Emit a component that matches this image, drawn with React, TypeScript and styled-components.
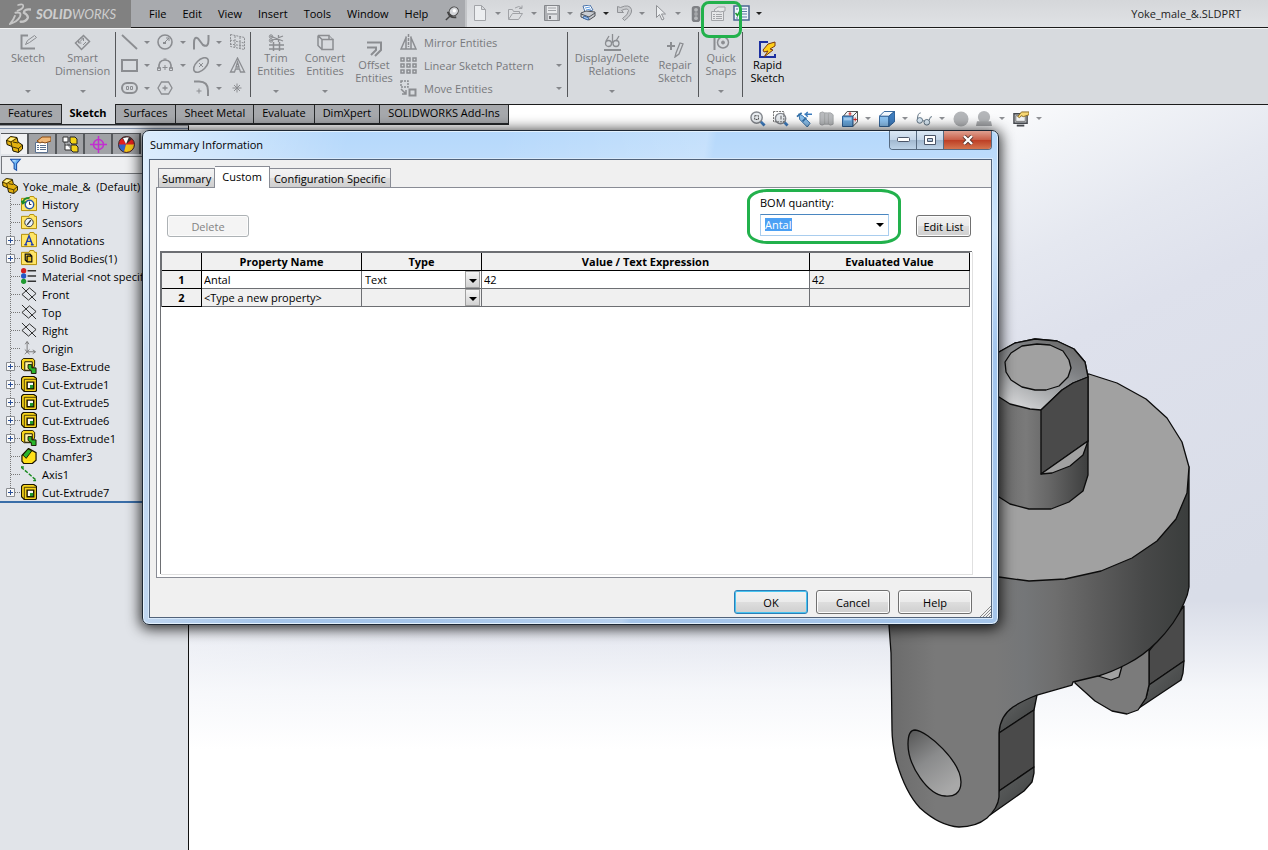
import React, { useEffect, useRef } from 'react';
import styled, { createGlobalStyle, css } from 'styled-components';

const GREEN = '#22b14c';

const GlobalStyle = createGlobalStyle`
  *, *::before, *::after { box-sizing: border-box; }
  body { margin: 0; background: #fff; }
  body, button, input, select, table {
    font-family: "Open Sans", "Noto Sans", sans-serif;
    font-size: 11px;
    line-height: 13px;
    color: #000;
  }
  button { padding: 0; border: 0; background: none; white-space: nowrap; }
  ul { list-style: none; margin: 0; padding: 0; }
  svg { display: block; flex: none; }
`;

/* ---------- icons ---------- */

const g = '#8b8d91';
const glyphs: Record<string, React.ReactNode> = {
  ds: (
    <g fill="none" stroke="#c6c6c6" strokeLinecap="round">
      <path d="M7 1.500Q11.500.2 11 2.800 10.300 4.800 6.500 6" strokeWidth="1.300" />
      <path d="M5 7.500Q10 6.500 8.500 10.500 6.500 14.500 1 16 3.500 13 4.500 10" strokeWidth="1.500" />
      <path d="M16.500 5Q11.500 4.500 11.500 7.500 15 9.500 14.500 11.500 13.500 14.500 9 14.500" strokeWidth="1.800" />
    </g>
  ),
  pin: (
    <g>
      <path d="M2 15 L7 10" stroke="#444" strokeWidth="1.500" />
      <ellipse cx="10.500" cy="6" rx="5" ry="4.500" fill="#d4d6da" stroke="#444" transform="rotate(-40 10 6)" />
      <path d="M4 6 Q6 13 13 12" fill="none" stroke="#444" strokeWidth="2" />
      <circle cx="11" cy="5" r="1.800" fill="#fff" />
    </g>
  ),
  newDoc: <path d="M2.500.5h7l4 4v11h-11zM9.500.5v4h4" fill="#eceef0" stroke="#a2a4a8" />,
  open: (
    <g fill="#dcdee1" stroke="#a0a2a6">
      <path d="M.5 14V4.500h4l1 2h6v3" />
      <path d="M.5 14.500l4-6h10l-4 6z" />
      <path d="M7 3q4-3 7 0m0-2.500v3h-3" fill="none" />
    </g>
  ),
  save: (
    <g>
      <path d="M.5.5h15v15h-15z" fill="#aeb0b4" stroke="#85878b" />
      <path d="M3 1h10v7H3z" fill="#e9eaec" />
      <path d="M4 3h8M4 5.500h8" stroke="#a0a2a6" />
      <path d="M4 10h9v5H4z" fill="#dfe0e3" />
      <path d="M5 11h2v3H5z" fill="#77797d" />
    </g>
  ),
  print: (
    <g>
      <path d="M3 1l7-1 3 5-8 2z" fill="#fff" stroke="#4a72a8" />
      <path d="M5 3l5-1M6 5l5-1" stroke="#5d9be0" />
      <path d="M1 8l5-2 9 1v4l-6 4-8-3z" fill="#c9ccd1" stroke="#4d5056" />
      <path d="M1 9l8 3 6-4" fill="none" stroke="#4d5056" />
      <path d="M4 11l5 2-1 2-5-2z" fill="#9fc3ec" stroke="#3f6aa5" />
    </g>
  ),
  undo: <path d="M1.500 1.500v6h6l-2-2q6-3 7 0 0 4-6 8 1 1 2 2 8-6 7-11-2-6-11-2z" fill="#c9cbce" stroke="#909296" />,
  cursor: <path d="M4.500.5v12l3-3 2.500 5.500 2-1-2.500-5h4z" fill="#eceef0" stroke="#8f9195" />,
  traffic: (
    <g>
      <rect x="4" y="0" width="9" height="17" rx="3" fill="#7f8185" />
      <circle cx="8.500" cy="4" r="2" fill="#b6b8bb" />
      <circle cx="8.500" cy="8.500" r="2" fill="#a5a7aa" />
      <circle cx="8.500" cy="13" r="2" fill="#b6b8bb" />
    </g>
  ),
  props: (
    <g stroke="#a2a4a8" fill="#e6e7e9">
      <path d="M1.500 6.500h12v9h-12z" />
      <path d="M3 9.500h2m1 0h6M3 11.500h2m1 0h6M3 13.500h2m1 0h6" />
      <path d="M4 5l4-3h7v4l-5 1-2-1-2 1z" />
    </g>
  ),
  list: (
    <g>
      <path d="M1 1h15v14H1z" fill="#eef4fb" stroke="#4a6590" strokeWidth="1.500" />
      <path d="M2.500 8l2 2.500 2-4" fill="none" stroke="#1c9a2e" strokeWidth="1.500" />
      <path d="M3 4h2M8 4h6M8 6.500h6M8 9h6M8 12h6M3 13h2" stroke="#5c78a3" />
    </g>
  ),
  sketch: (
    <g fill="none" stroke={g}>
      <path d="M8 1.500H1.500v13H15" strokeWidth="2" />
      <path d="M5.500 10.500l2-4 7-5 2 2-7 5z" />
    </g>
  ),
  dim: (
    <g fill="none" stroke={g}>
      <path d="M1.500 9L9.500 1.500l6 6-8 8z" strokeWidth="1.500" />
      <path d="M4.500 9l5-5m-5 5v-3m0 3h3m2-5v3m0-3h-3M9 11l3-3" />
    </g>
  ),
  line: <path d="M1 1l15 14" stroke={g} strokeWidth="1.800" />,
  circle: (
    <g fill="none" stroke={g}>
      <circle cx="8" cy="8" r="7" strokeWidth="1.600" />
      <path d="M7 9l5-5M9 4h3v3" />
      <path d="M6 8h3v2H6z" fill={g} stroke="none" />
    </g>
  ),
  spline: <path d="M1 15.500V9Q1 2 5 4.500L10 11Q15.500 14 15.500 6V1" fill="none" stroke={g} strokeWidth="2" />,
  grid: <path d="M1.500.5l14 3v12l-14-3zM6 2v12M11 3v12M1 6l14 3M1 10l14 2" fill="none" stroke={g} strokeDasharray="2 1" />,
  rect: <path d="M1 3h15v11H1z" fill="none" stroke={g} strokeWidth="2" />,
  arc: (
    <g fill="none" stroke={g}>
      <path d="M2 12Q1 3 8 3t6 9" strokeWidth="1.600" />
      <path d="M5.500 10.500h5m-2.500-2.500v5M.5 10.500h3v3h-3zM12.500 10.500h3v3h-3zM6.500 2h3" />
    </g>
  ),
  ellipse: (
    <g fill="none" stroke={g}>
      <ellipse cx="8" cy="8" rx="9" ry="5" transform="rotate(-45 8 8)" strokeWidth="1.600" />
      <path d="M6 6l4 4m0-4l-4 4" />
    </g>
  ),
  text: <path d="M8.500 1L1.500 15h4l1-3h4l1 3h4zM8.500 5L7 10h3z" fill="none" stroke={g} strokeWidth="1.300" />,
  slot: (
    <g fill="none" stroke={g}>
      <rect x="1" y="3" width="15" height="10" rx="5" strokeWidth="2" />
      <path d="M5.500 6.500h2v3h-2zM9.500 6.500h2v3h-2z" />
    </g>
  ),
  hex: <path d="M4.500 2h7l3.500 6-3.500 6h-7L1 8zM5.500 8h5M8 5.500v5" fill="none" stroke={g} strokeWidth="1.300" />,
  fillet: (
    <g fill="none" stroke={g}>
      <path d="M1 1.500h5q9 0 9 9V16" strokeWidth="2" />
      <path d="M3.500 11h5M6 8.500v5" />
    </g>
  ),
  point: <path d="M3.500 8h9M8 3.500v9M5 5l6 6M11 5l-6 6" stroke={g} fill="none" />,
  trim: (
    <g fill="none" stroke={g}>
      <path d="M1 11h15M1 15h15M5.500 8v9M11.500 8v9" strokeWidth="1.500" />
      <path d="M2 2l13 5M2 7l13-5M10.500 1v7" strokeWidth="1.300" />
      <circle cx="3" cy="2.500" r="1.700" />
      <circle cx="3" cy="6.500" r="1.700" />
    </g>
  ),
  convert: (
    <g fill="none" stroke={g}>
      <path d="M1 1.500h11v4M1 1.500v10l4 4M1 1.500l4 4h11v10H5v-10" strokeWidth="1.500" />
      <path d="M12 1.500l4 4" />
    </g>
  ),
  offset: <path d="M1 1.500h14V9l-6 6M1 6.500h9V9l-5 5" fill="none" stroke={g} strokeWidth="2" />,
  mirror: (
    <g fill="none" stroke={g} strokeWidth="1.500">
      <path d="M6.500 2.500L1 15h15L10.500 2.500M6 15V2.500M11 15V2.500" />
      <path d="M8.500 0v13" strokeDasharray="3 1" />
    </g>
  ),
  pattern: (
    <path
      d="M1 1h3v3H1zM7 1h3v3H7zM13 1h3v3h-3zM1 7h3v3H1zM7 7h3v3H7zM13 7h3v3h-3zM1 13h3v3H1zM7 13h3v3H7zM13 13h3v3h-3z"
      fill="none"
      stroke={g}
      strokeWidth="1.500"
    />
  ),
  move: (
    <g fill="none" stroke={g}>
      <path d="M1 1h7v6H1z" strokeWidth="1.500" strokeDasharray="2 1" />
      <path d="M9.500 9.500h6v6h-6z" strokeWidth="2" />
      <path d="M1 9l5 5m0-4v4H2" strokeWidth="1.500" />
    </g>
  ),
  relations: (
    <g fill="none" stroke={g}>
      <path d="M0 16h17" strokeWidth="2" />
      <circle cx="4.500" cy="9.500" r="3" strokeWidth="1.300" />
      <circle cx="12" cy="9.500" r="3" strokeWidth="1.300" />
      <path d="M2 7l3-5M8.500 0v9M12 7l3-5" strokeWidth="1.300" />
    </g>
  ),
  repair: (
    <g fill="none" stroke={g}>
      <path d="M0 5h8M4 1v8" strokeWidth="2" />
      <path d="M9 12l4-10 3 1-4 10-4 3z" strokeWidth="1.300" />
    </g>
  ),
  snaps: (
    <g fill="none" stroke={g}>
      <path d="M1.500 1v15" strokeWidth="2" />
      <circle cx="10" cy="8.500" r="5.500" strokeWidth="1.500" />
      <circle cx="10" cy="8.500" r="1.500" fill={g} />
    </g>
  ),
  rapid: (
    <g>
      <path d="M9 1H1v15h15v-3" fill="none" stroke="#1c2fa0" strokeWidth="2" />
      <path d="M4 9l5-6 7-2v4l-5 3 3 1-9 7 4-6-4 1z" fill="#ffcf1a" stroke="#7a3a10" />
    </g>
  ),
  zoomFit: (
    <g>
      <path d="M11 11l4.500 4.500" stroke="#3f7fc4" strokeWidth="3" />
      <circle cx="7" cy="7" r="6" fill="#e9edf1" stroke="#84888e" strokeWidth="1.500" />
      <path d="M5 5h4v4H5z" fill="none" stroke="#444" strokeDasharray="2 1" />
    </g>
  ),
  zoomArea: (
    <g>
      <path d="M11 11l4.500 4.500" stroke="#3f7fc4" strokeWidth="3" />
      <circle cx="8" cy="8" r="5.500" fill="#e9edf1" stroke="#84888e" strokeWidth="1.500" />
      <path d="M.5.500h11v11H.5z" fill="none" stroke="#666" strokeDasharray="2 1" />
      <path d="M8.500 5v4" stroke="#555" />
    </g>
  ),
  prevView: (
    <g>
      <path d="M3 3l4 2 8 8-3 4-8-8z" fill="#8cc0ec" stroke="#2f6da6" />
      <path d="M1 6l5-4M7 11l4-4" stroke="#2f6da6" strokeWidth="1.800" />
      <path d="M9 3.500h8M10 3.500l2.500-2.500M10 3.500l2.500 2.500" stroke="#3a7bbd" strokeWidth="1.500" />
    </g>
  ),
  section: <path d="M1 2q3-2 5 0h3q4-1 6 2v10q-3 2-5 0H6q-3 2-5 0z M6 2v12 M10 3v11" fill="#b9bbbe" stroke="#a3a5a8" />,
  orient: (
    <g>
      <path d="M1.500 5.500l4-5h11v11l-5 5v-11z" fill="#f5f6f8" stroke="#444" />
      <path d="M.5 5.500h11v11H.5z" fill="#6aa9df" stroke="#245a94" />
      <path d="M2 7h8v3H2z" fill="#a5cff3" />
      <path d="M11.500 5.500l5-5" stroke="#444" />
      <path d="M8.500 1v4M7 3h3M12 9h4M14 7v4" stroke="#d02424" />
    </g>
  ),
  display: (
    <g>
      <path d="M.5 5.500h10v11H.5z" fill="#8ec4f2" stroke="#2b5f98" />
      <path d="M.5 5.500l5-5h11l-6 5z" fill="#f2f7fc" stroke="#2b5f98" />
      <path d="M10.500 5.500l6-5v11l-6 5z" fill="#3f7ec0" stroke="#2b5f98" />
    </g>
  ),
  glasses: (
    <g fill="#dcebf7" stroke="#5c7080">
      <circle cx="4" cy="10" r="3" />
      <circle cx="11.500" cy="12" r="3" />
      <path d="M1.500 8Q2 2 5 2M14 10q1-5 3-4M7 10l2 1" fill="none" />
    </g>
  ),
  sphere: <circle cx="8.500" cy="8.500" r="8" fill="#b4b6b9" />,
  scene: (
    <g fill="#b4b6b9">
      <circle cx="8.500" cy="6.500" r="6.500" />
      <path d="M1 11h15l1 5H0z" fill="#a9abae" />
    </g>
  ),
  monitor: (
    <g>
      <path d="M1 3h14v10H1z" fill="#c3c6ca" stroke="#45484d" strokeWidth="1.500" />
      <path d="M3 5h10v6H3z" fill="#eef1f4" stroke="#777" />
      <path d="M4 15.500h8" stroke="#45484d" strokeWidth="2" />
      <path d="M5 6l4-5h8v3l-6 2-2-1-2 2z" fill="#f6d774" stroke="#8a6a20" />
    </g>
  ),
  part: (
    <g stroke="#1d1700">
      <path d="M.5 4l4-3.500L11 1.500 12 6l4.500 3v4l-4 3.500L7 15 6 10.500 1 8.500z" fill="#e3b10f" />
      <path d="M1 4.500l4 1.500 6-4M5 6l1 4.500M6.500 11l6 1.500 4-3.500M12.500 12.500v4M7 6l5 1" fill="none" strokeWidth=".8" />
      <path d="M2 4l3-2.500 4.500.5L5 5z" fill="#fff08a" stroke="none" />
    </g>
  ),
  propPanel: (
    <g>
      <path d="M1.500 6.500h12v10h-12z" fill="#fff" stroke="#5b7190" />
      <path d="M3 9.500h2m1 0h6M3 11.500h2m1 0h6M3 13.500h2m1 0h6" stroke="#5b7190" />
      <path d="M3 5l5-4h9v4l-6 2-3-1-2 1z" fill="#f0b878" stroke="#8d4c12" />
    </g>
  ),
  config: (
    <g>
      <path d="M1 1h5v5H1zM3 6v8h6M3 9h5" fill="#fff" stroke="#333" />
      <path d="M8 1h5l2 2v5h-5L8 6zM9 9h5l2 2v5h-5l-2-2z" fill="#f2d21a" stroke="#222" />
    </g>
  ),
  target: (
    <g fill="none" stroke="#c22fd0" strokeWidth="1.500">
      <circle cx="8.500" cy="8.500" r="5" />
      <path d="M8.500 0v17M0 8.500h17" />
    </g>
  ),
  ball: (
    <g>
      <circle cx="8.500" cy="8.500" r="8" fill="#e02020" />
      <path d="M8.500 8L4 2Q9-1 14 3z" fill="#333" />
      <path d="M8 8.500H.5Q0 14 6 16z" fill="#2f66c8" />
      <path d="M8 8.500l8.500 0Q15 17 6 16z" fill="#f2c81a" />
      <path d="M8 8L5 2l6-1z" fill="#fff" />
      <circle cx="8.500" cy="8.500" r="8" fill="none" stroke="#3a2a2a" />
    </g>
  ),
  funnel: (
    <g>
      <path d="M.5 1.500h12L8 7v8l-3-2V7z" fill="#6db6f5" stroke="#1c4fa8" strokeWidth="1.300" />
      <path d="M3 3.500h4" stroke="#e5f4ff" />
    </g>
  ),
  history: (
    <g>
      <path d="M.5 2.500h8l1-2h4l1 2h2v13H.5z" fill="#ffe566" stroke="#b08a00" />
      <circle cx="9" cy="9" r="4.500" fill="#fff" stroke="#2a5aa8" strokeWidth="1.500" />
      <path d="M9 6v3h2" stroke="#222" fill="none" />
      <path d="M2 7q1-5 7-5M.5 5l1.500 3 3-2" stroke="#178a2a" strokeWidth="1.800" fill="none" />
    </g>
  ),
  sensor: (
    <g>
      <path d="M.5 2.500h8l1-2h4l1 2h2v13H.5z" fill="#ffe566" stroke="#b08a00" />
      <circle cx="8.500" cy="9" r="4.500" fill="#e8f2fb" stroke="#333" />
      <path d="M6.500 11.500l4-5" stroke="#333" strokeWidth="1.500" />
    </g>
  ),
  annot: (
    <g>
      <path d="M.5 2.500h8l1-2h4l1 2h2v13H.5z" fill="#ffe566" stroke="#b08a00" />
      <path d="M5 13l3.500-9 3.500 9M6.500 10h4M3.500 13.500h3M10.500 13.500h3" fill="none" stroke="#1f3fae" strokeWidth="1.500" />
    </g>
  ),
  bodies: (
    <g>
      <path d="M.5 2.500h8l1-2h4l1 2h2v13H.5z" fill="#ffe566" stroke="#b08a00" />
      <path d="M4.500 4.500h5l2 2v6h-5l-2-2zM6.500 6.500h5m-5 0v6" fill="#e8c020" stroke="#111" strokeWidth="1.300" />
    </g>
  ),
  material: (
    <g>
      <path d="M7 3h9M7 8.500h9M7 14h9" stroke="#333" strokeWidth="1.500" />
      <circle cx="2.800" cy="2.800" r="2.800" fill="#d32020" />
      <circle cx="2.800" cy="8.500" r="2.800" fill="#2458c8" />
      <circle cx="2.800" cy="14.200" r="2.800" fill="#1e9a30" />
    </g>
  ),
  plane: <path d="M1 9l8-7 7 6-8 7zM1 1l15 15" fill="none" stroke="#222" />,
  origin: <path d="M6.500 13V2M4.500 4.500l2-3 2 3M6 12.500h9M12.500 10.500l3 2-3 2M4 10l5 5M9 10l-5 5" fill="none" stroke="#777" />,
  boss: (
    <g stroke="#1a1400">
      <path d="M.5 2.500l2-2h10l2 2v5l-2 6h-9l-3-2z" fill="#f6d21a" />
      <path d="M4 4h8v9H4z" fill="#fff3a8" />
      <path d="M7.500 7h4v3.500h4.500v6h-5v-3L7.500 11z" fill="#2bb52b" />
    </g>
  ),
  cut: (
    <g stroke="#1a1400">
      <path d="M.5 2.500l2-2h11l3 2v13l-1 1h-12l-3-3z" fill="#f6d21a" strokeWidth="1.300" />
      <path d="M3.500 3.500h13M3.500 3.500v13" strokeWidth=".8" />
      <path d="M6.500 6.500h7v7h-7z" fill="#fff" strokeWidth="1.500" />
      <path d="M9.500 9.500h3.500V13H9.500z" fill="#1f9a2c" stroke="none" />
    </g>
  ),
  chamfer: (
    <g stroke="#1a1400">
      <path d="M1 8l7-7.500 8 4.500v8l-4 3.500H3L1 14z" fill="#ffe01a" strokeWidth="1.300" />
      <path d="M2 7.500L7.500 1l4 2-6 8z" fill="#2bb52b" />
    </g>
  ),
  axis: (
    <g stroke="#178a1e" strokeWidth="1.500">
      <path d="M0 1l16 14" strokeDasharray="4 1.500" />
      <path d="M0 1h3M13 15.500h3" />
    </g>
  ),
};

const Icon = ({ name, size = 16 }: { name: string; size?: number }) => (
  <svg width={size} height={size} viewBox="0 0 17 17" aria-hidden="true">
    {glyphs[name]}
  </svg>
);

const Caret = ({ color = '#85878b', size = 6 }: { color?: string; size?: number }) => (
  <svg width={size} height={size / 2} viewBox="0 0 6 3" aria-hidden="true">
    <path d="M0 0h6L3 3z" fill={color} />
  </svg>
);

/* ---------- title bar ---------- */

const Page = styled.div`
  position: relative;
  display: flex;
  flex-direction: column;
  min-height: 100vh;
  background:
    linear-gradient(180deg, rgba(255, 255, 255, 0) 600px, rgba(250, 251, 253, 0.85) 690px, #fff 750px),
    linear-gradient(155deg, #fff 38%, #f1f3f7 44%, #e5e8f0 51%, #dee1ec 58%, #d9dde8 80%);
`;

const TitleBar = styled.header`
  display: flex;
  height: 28px;
  background: linear-gradient(#d5d7da, #e0e2e5);
  border-bottom: 1px solid #1c1c1c;
`;

const Logo = styled.div`
  display: flex;
  align-items: center;
  gap: 5px;
  width: 131px;
  padding-left: 9px;
  margin-bottom: -1px;
  background: #818181;
  color: #cdcdcd;
`;

const Brand = styled.span<{ $bold?: boolean }>`
  font: italic ${(p) => (p.$bold ? 900 : 400)} 13px/30px Lato, sans-serif;
`;

const Menu = styled.nav`
  display: flex;
  align-items: center;
  gap: 16px;
  width: 336px;
  padding-left: 18px;
  background: #a8aaae;
  border-right: 2px solid #c3c5c8;
`;

const MenuItem = styled.button`
  font-size: 11px;
`;

const QuickBar = styled.div`
  display: flex;
  align-items: center;
  padding-left: 3px;
`;

const ToolButton = styled.button<{ $width?: number }>`
  display: flex;
  align-items: center;
  justify-content: center;
  width: ${(p) => p.$width ?? 20}px;
  height: 20px;
`;

const Highlighted = styled.span`
  position: relative;
  display: flex;
  margin: 0 3px 0 2px;

  &::after {
    content: '';
    position: absolute;
    inset: -3px -14px -14px -7px;
    border: 3px solid ${GREEN};
    border-radius: 8px;
    z-index: 2;
    pointer-events: none;
  }
`;

const FileName = styled.span`
  margin: 7px 27px 0 auto;
  color: #222;
`;

/* ---------- ribbon ---------- */

const Ribbon = styled.div`
  display: flex;
  height: 77px;
  padding: 3px 0 7px;
  background: #d7dade;
  border-top: 1px solid #f3f4f5;
  border-bottom: 1px solid #1c1c1c;
`;

const Group = styled.div<{ $width?: number; $last?: boolean }>`
  display: flex;
  width: ${(p) => (p.$width ? `${p.$width}px` : 'auto')};
  padding-left: 3px;
  border-right: ${(p) => (p.$last ? 'none' : '1px solid #55575a')};
`;

const BigButton = styled.button<{ $width: number; $low?: boolean; $on?: boolean }>`
  display: flex;
  flex-direction: column;
  align-items: center;
  width: ${(p) => p.$width}px;
  padding-top: ${(p) => (p.$low ? 9 : 2)}px;
  color: ${(p) => (p.$on ? '#000' : '#77797c')};
  white-space: pre-line;

  & > span:last-of-type {
    height: 39px;
    line-height: 13px;
  }
`;

const DrawGrid = styled.div`
  display: grid;
  grid-template-columns: repeat(4, 36px);
  grid-auto-rows: 23px;
  align-items: start;
  width: 132px;
`;

const DrawCell = styled.div`
  display: flex;
  align-items: center;
`;

const List = styled.div`
  display: flex;
  flex: 1;
  flex-direction: column;
`;

const ListButton = styled.button`
  display: flex;
  flex: none;
  align-items: center;
  gap: 7px;
  height: 23px;
  padding: 0 5px 3px 4px;
  color: #77797c;

  & > span {
    flex: 1;
    text-align: left;
  }
`;

const Big = ({ icon, label, width, low, on }: { icon: string; label: string; width: number; low?: boolean; on?: boolean }) => (
  <BigButton $width={width} $low={low} $on={on}>
    <Icon name={icon} size={17} />
    <span>{label}</span>
    {!low && <Caret />}
  </BigButton>
);

const drawTools: [string, boolean][] = [
  ['line', true], ['circle', true], ['spline', true], ['grid', false],
  ['rect', true], ['arc', true], ['ellipse', true], ['text', false],
  ['slot', true], ['hex', false], ['fillet', true], ['point', false],
];

/* ---------- command tabs and view toolbar ---------- */

const TabRow = styled.div`
  display: flex;
  height: 20px;
`;

const CommandTab = styled.button<{ $active?: boolean }>`
  height: 20px;
  padding: 0 8px 3px;
  border: solid #26282a;
  border-width: 0 1px 2px 0;
  background: #a6a8ac;

  ${(p) =>
    p.$active &&
    css`
      height: 21px;
      margin-top: -1px;
      border-bottom-width: 1px;
      background: #d7dade;
      font-weight: 700;
    `}
`;

const ViewBar = styled.div`
  display: flex;
  align-items: center;
  height: 27px;
  margin: 0 222px 0 auto;
`;

const viewTools: [string, boolean][] = [
  ['zoomFit', false], ['zoomArea', false], ['prevView', false], ['section', false], ['orient', true],
  ['display', true], ['glasses', true], ['sphere', false], ['scene', true], ['monitor', true],
];

/* ---------- feature tree ---------- */

const Workspace = styled.main`
  display: flex;
  flex: 1;
`;

const SidePanel = styled.aside`
  width: 189px;
  padding-top: 2px;
  background: #e1e4e9;
  border-top: 1px solid #8d9096;
  border-right: 1px solid #111;
`;

const PanelTabs = styled.div`
  display: flex;
  padding: 4px 0 2px 1px;
  border-top: 1px solid #7f8fa8;
`;

const PanelTab = styled.button<{ $active?: boolean }>`
  display: flex;
  align-items: center;
  justify-content: center;
  width: 28px;
  height: 21px;
  border-right: 2px solid #55585c;
  border-top: 1px solid #55585c;
  background: ${(p) => (p.$active ? '#f0f1f3' : '#a0a2a6')};
`;

const FilterBox = styled.div`
  display: flex;
  align-items: center;
  height: 18px;
  margin-left: 1px;
  padding-left: 8px;
  border: 1px solid #74777c;
  background: #eeeff1;
`;

const Tree = styled.ul`
  padding-top: 3px;
  border-bottom: 2px solid #3a6ea8;
`;

const TreeItem = styled.li<{ $root?: boolean }>`
  display: flex;
  align-items: center;
  gap: 5px;
  height: 18px;
  padding-left: ${(p) => (p.$root ? 2 : 0)}px;
  white-space: pre;
`;

const TreeIcons = styled.span`
  display: flex;
  align-items: center;
`;

const Guide = ({ expandable, last }: { expandable?: boolean; last?: boolean }) => (
  <svg width="21" height="18" viewBox="0 0 21 18" aria-hidden="true">
    <path d={`M10.500 0V${last ? 9 : 18}M11 9.500h9`} stroke="#777" strokeDasharray="1 1" fill="none" />
    {expandable && (
      <g>
        <path d="M6.500 5.500h8v8h-8z" fill="#f8f9fa" stroke="#8a8d92" />
        <path d="M8 9.500h5M10.500 7v5" stroke="#2a4f98" />
      </g>
    )}
  </svg>
);

const features: { icon: string; label: string; plus?: boolean }[] = [
  { icon: 'history', label: 'History' },
  { icon: 'sensor', label: 'Sensors' },
  { icon: 'annot', label: 'Annotations', plus: true },
  { icon: 'bodies', label: 'Solid Bodies(1)', plus: true },
  { icon: 'material', label: 'Material <not specified>' },
  { icon: 'plane', label: 'Front' },
  { icon: 'plane', label: 'Top' },
  { icon: 'plane', label: 'Right' },
  { icon: 'origin', label: 'Origin' },
  { icon: 'boss', label: 'Base-Extrude', plus: true },
  { icon: 'cut', label: 'Cut-Extrude1', plus: true },
  { icon: 'cut', label: 'Cut-Extrude5', plus: true },
  { icon: 'cut', label: 'Cut-Extrude6', plus: true },
  { icon: 'boss', label: 'Boss-Extrude1', plus: true },
  { icon: 'chamfer', label: 'Chamfer3' },
  { icon: 'axis', label: 'Axis1' },
  { icon: 'cut', label: 'Cut-Extrude7', plus: true },
];

/* ---------- model view ---------- */

const Viewport = styled.section`
  display: flex;
  flex: 1;
  justify-content: flex-end;
  align-items: flex-start;
  padding-top: 195px;
  overflow: hidden;
`;

const YokeModel = () => (
  <svg width="388" height="520" viewBox="880 320 388 520" role="img" aria-label="Yoke part">
    <defs>
      <linearGradient id="body" gradientUnits="userSpaceOnUse" x1="890" y1="0" x2="1190" y2="0">
        <stop offset="0" stopColor="#6b6b6b" />
        <stop offset=".15" stopColor="#797979" />
        <stop offset=".35" stopColor="#797979" />
        <stop offset=".45" stopColor="#747678" />
        <stop offset=".55" stopColor="#6e6e6e" />
        <stop offset=".68" stopColor="#5d5d5d" />
        <stop offset=".85" stopColor="#474848" />
        <stop offset="1" stopColor="#3a3d3c" />
      </linearGradient>
      <linearGradient id="shaft" gradientUnits="userSpaceOnUse" x1="999" y1="0" x2="1089" y2="0">
        <stop offset="0" stopColor="#6b6b6b" />
        <stop offset=".3" stopColor="#7a7a7a" />
        <stop offset=".55" stopColor="#676767" />
        <stop offset="1" stopColor="#3c3d3d" />
      </linearGradient>
      <linearGradient id="cone" gradientUnits="userSpaceOnUse" x1="1030" y1="410" x2="1064" y2="342">
        <stop offset="0" stopColor="#cfd0d2" />
        <stop offset=".3" stopColor="#aaacae" />
        <stop offset=".7" stopColor="#7f8184" />
        <stop offset="1" stopColor="#6c6c6c" />
      </linearGradient>
      <linearGradient id="bore" x1="0" y1="0" x2=".6" y2="1">
        <stop offset="0" stopColor="#555" />
        <stop offset=".5" stopColor="#8a8b8c" />
        <stop offset="1" stopColor="#a8a8a8" />
      </linearGradient>
      <linearGradient id="bend" x1="0" y1="0" x2="1" y2="1">
        <stop offset="0" stopColor="#646666" />
        <stop offset="1" stopColor="#3c3e3e" />
      </linearGradient>
    </defs>
    <g stroke="#0c0c0c" strokeWidth="1.300" strokeLinejoin="round">
      <path d="M1149 651L1184 606V661L1149 685z" fill="#4a4a4a" />
      <path d="M1184 661L1183 673 1181 680 1139 708 1146 698 1149 685z" fill="url(#bend)" />
      <path d="M1075 683L1095 701 1112 711 1127 714 1138 710 1146 698 1149 685V640H1075z" fill="#7b7b7b" />
      <path d="M1098 676L1111 680 1119 677 1122 666z" fill="#a2a2a2" />
      <path d="M1037 695L1034 710 999 733 1000 705z" fill="url(#bend)" />
      <path d="M999 733L1034 710V767L999 791z" fill="#4a4a4a" />
      <path d="M1034 767L1034 773 1032 782 1024 791 990 815 999 791z" fill="url(#bend)" />
      <path
        d="M1189 467V587Q1188 595 1184 603 1180 613 1173 623 1165 634 1157 642 1143 656 1127 664 1112 672 1098 676L1073 682 1072 685 1037 695Q1022 701 1013 707 1000 716 999 733V797Q998 808 987 818 976 827 959 827 940 826 920 808 905 792 896 760 892 742 892 730L891 653 889 625 889 540 1000 480z"
        fill="url(#body)"
      />
      <path
        d="M1089 374L1117 383 1146 399 1167 418 1182 442 1189 467 1187 493 1176 519 1157 541 1132 558 1101 571 1065 579 1029 581 999 577 950 560 950 400z"
        fill="#a1a1a1"
      />
      <path
        d="M980 360L999 352 1015 343 1035 339 1057 341 1074 349 1085 362 1088 377V475L1083 491 1069 502 1051 509 1029 509 1010 504 999 497 980 485z"
        fill="url(#shaft)"
      />
      <path
        d="M980 360L999 352 1015 343 1035 339 1057 341 1074 349 1085 362 1088 377 1073 383 1062 390 1041 410 1030 409 1010 404 999 397 980 385z"
        fill="url(#cone)"
      />
      <path
        d="M1037 344L1050 345 1063 351 1069 360 1071 368 1068 377 1059 386 1046 390 1035 390 1022 387 1011 380 1006 372 1005 362 1011 353 1022 346z"
        fill="#a1a1a1"
      />
      <path d="M1041 410L1062 390 1073 383 1088 377V441L1041 474z" fill="#4a4a4a" />
      <path d="M1041 474L1088 441 1083 455 1070 466 1052 473z" fill="#a1a1a1" />
      <path
        d="M915 730C928 731 961 762 961 782 961 794 953 797 945 796 928 795 908 766 908 744 908 735 910 730 915 730z"
        fill="url(#bore)"
      />
    </g>
  </svg>
);

/* ---------- dialog ---------- */

const Window = styled.div`
  position: absolute;
  top: 130px;
  left: 142px;
  right: 269px;
  padding: 0 6px 6px;
  border: 1px solid #1d2733;
  border-radius: 7px;
  background:
    linear-gradient(100deg, rgba(255, 255, 255, 0.5), rgba(255, 255, 255, 0) 22%, rgba(255, 255, 255, 0) 38%, rgba(255, 255, 255, 0.2) 60%, rgba(255, 255, 255, 0) 61%),
    linear-gradient(180deg, #b5d8fb, #cfe5fb 20%, #a3c6ee 45%, #a5c5ea);
  box-shadow:
    inset 0 0 0 1px #e3f1fd,
    0 2px 14px 2px rgba(0, 0, 0, 0.8);
`;

const Caption = styled.div`
  display: flex;
  justify-content: space-between;
  align-items: flex-start;
  height: 28px;
`;

const CaptionText = styled.h1`
  margin: 7px 0 0 1px;
  font-size: 11px;
  line-height: 14px;
  font-weight: 400;
`;

const CaptionButtons = styled.div`
  display: flex;
  border: 1px solid #566a80;
  border-top: 0;
  border-radius: 0 0 4px 4px;
  overflow: hidden;
`;

const CaptionButton = styled.button<{ $close?: boolean }>`
  display: flex;
  align-items: center;
  justify-content: center;
  width: ${(p) => (p.$close ? 47 : 27)}px;
  height: 18px;
  border-right: ${(p) => (p.$close ? 0 : '1px solid #566a80')};
  background: ${(p) =>
    p.$close ? 'linear-gradient(#dfa090, #c9604a 48%, #bd3f25 52%, #d4754f)' : 'linear-gradient(#dbe8f5, #c3d5e8 48%, #a2b9d0 52%, #bdd3e8)'};
`;

const Client = styled.div`
  padding: 6px 0 3px 6px;
  border: 1px solid #52637a;
  background: #f0f0f0;
  box-shadow: 0 0 0 1px #d8e9fa;
`;

const Tabs = styled.div`
  display: flex;
  align-items: flex-end;
  padding-left: 2px;
`;

const Tab = styled.button<{ $active?: boolean }>`
  height: 19px;
  padding: 0 4px;
  border: 1px solid #898c95;
  border-left-width: 0;
  border-bottom-width: 0;
  background: linear-gradient(#f3f3f3, #ebebeb 50%, #dcdcdc 52%, #cfcfcf);

  &:first-child {
    padding: 0 3px;
    border-left-width: 1px;
  }

  ${(p) =>
    p.$active &&
    css`
      height: 22px;
      margin-bottom: -1px;
      padding: 0 7px 2px;
      background: #fff;
    `}
`;

const Panel = styled.div`
  padding: 1px 19px 3px 3px;
  border: solid #898c95;
  border-width: 1px 0 1px 1px;
  background: #fff;
`;

const Controls = styled.div`
  display: flex;
  align-items: flex-end;
  padding: 0 1px 0 7px;
  margin-bottom: 7px;
`;

const Button = styled.button<{ $width: number; $tall?: boolean; $primary?: boolean }>`
  width: ${(p) => p.$width}px;
  height: ${(p) => (p.$tall ? 24 : 22)}px;
  border: 1px solid ${(p) => (p.$primary ? '#2c7fb8' : '#707070')};
  border-radius: 3px;
  background: linear-gradient(#f2f2f2, #ebebeb 48%, #dddddd 52%, #cfcfcf);
  box-shadow: inset 0 0 0 1px ${(p) => (p.$primary ? '#48c4f0' : '#fcfcfc')};

  &:disabled {
    border-color: #adb2b5;
    background: #f4f4f4;
    color: #838383;
  }
`;

const Quantity = styled.div`
  display: flex;
  flex-direction: column;
  gap: 5px;
  width: 154px;
  height: 55px;
  margin: 0 15px 0 auto;
  padding: 4px 10px 0;
  border: 3px solid ${GREEN};
  border-radius: 20px / 12px;
`;

const ComboBox = styled.div`
  display: flex;
  align-items: center;
  width: 129px;
  height: 22px;
  padding: 0 4px 1px;
  border: 1px solid #a9cdee;
  border-top-color: #4a86c0;
`;

const ComboInput = styled.input`
  flex: 1;
  min-width: 0;
  padding: 0;
  border: 0;
  outline: 0;
  background: none;

  &::selection {
    background: #4ba0f4;
    color: #fff;
  }
`;

const EditSlot = styled.div`
  padding-bottom: 7px;
`;

const GridFrame = styled.div`
  min-height: 323px;
  padding-right: 2px;
  border: solid #6d6f73;
  border-width: 1px 0 0 1px;
  box-shadow: 1px 1px 0 #e0e0e0;
`;

const Grid = styled.table`
  width: 100%;
  table-layout: fixed;
  border-collapse: separate;
  border-spacing: 0;
  border: solid #6d6f73;
  border-width: 1px 0 0 1px;

  th,
  td {
    height: 18px;
    padding: 0;
    border: solid #6d6f73;
    border-width: 0 1px 1px 0;
    line-height: 13px;
  }

  th {
    border-color: #000;
    background: #f0f0f0;
    font-weight: 700;
    text-align: center;
  }
`;

const GridRow = styled.tr<{ $shaded?: boolean }>`
  td {
    background: ${(p) => (p.$shaded ? '#f0f0f0' : '#fff')};
  }
  td:last-child {
    padding-left: 2px;
    background: #f0f0f0;
  }
`;

const CellInput = styled.input`
  display: block;
  width: 100%;
  height: 17px;
  padding: 0 2px;
  border: 0;
  background: none;
`;

const TypeCell = styled.div`
  display: flex;
  height: 17px;
`;

const TypeSelect = styled.select`
  flex: 1;
  min-width: 0;
  padding: 0 3px;
  border: 0;
  background: none;
  appearance: none;
`;

const DropMark = styled.span`
  display: flex;
  align-items: center;
  justify-content: center;
  width: 15px;
  margin-right: 1px;
  padding-top: 3px;
  border: 1px solid #a0a0a0;
  background: linear-gradient(#f4f4f4, #d2d2d2);
`;

const Footer = styled.div`
  display: flex;
  justify-content: flex-end;
  align-items: flex-end;
  gap: 8px;
  padding-top: 12px;
`;

const Grip = styled.span`
  margin-bottom: -3px;
`;

const properties = [
  { name: 'Antal', type: 'Text', value: '42' },
  { name: '<Type a new property>', type: '', value: '' },
];

const SummaryDialog = () => {
  const quantity = useRef<HTMLInputElement>(null);
  useEffect(() => {
    quantity.current?.focus();
    quantity.current?.select();
  }, []);

  return (
    <Window role="dialog" aria-labelledby="caption">
      <Caption>
        <CaptionText id="caption">Summary Information</CaptionText>
        <CaptionButtons>
          <CaptionButton aria-label="Minimize">
            <svg width="13" height="6"><rect x=".5" y=".5" width="12" height="4" rx="1" fill="#fff" stroke="#4a5568" /></svg>
          </CaptionButton>
          <CaptionButton aria-label="Maximize">
            <svg width="13" height="10">
              <path d="M.5.5h11v9H.5zM3.500 3.500h5v3h-5z" fill="#fff" stroke="#4a5568" fillRule="evenodd" />
            </svg>
          </CaptionButton>
          <CaptionButton $close aria-label="Close">
            <svg width="12" height="10" viewBox="0 0 12 10">
              <path d="M2 1l8 8M10 1L2 9" stroke="#55342e" strokeWidth="4" />
              <path d="M2 1l8 8M10 1L2 9" stroke="#fff" strokeWidth="2.400" />
            </svg>
          </CaptionButton>
        </CaptionButtons>
      </Caption>
      <Client>
        <Tabs>
          <Tab>Summary</Tab>
          <Tab $active>Custom</Tab>
          <Tab>Configuration Specific</Tab>
        </Tabs>
        <Panel>
          <Controls>
            <EditSlot>
              <Button $width={82} disabled>Delete</Button>
            </EditSlot>
            <Quantity>
              <label htmlFor="quantity">BOM quantity:</label>
              <ComboBox>
                <ComboInput id="quantity" ref={quantity} defaultValue="Antal" />
                <Caret color="#000" size={8} />
              </ComboBox>
            </Quantity>
            <EditSlot>
              <Button $width={55}>Edit List</Button>
            </EditSlot>
          </Controls>
          <GridFrame>
            <Grid>
              <colgroup>
                <col width="40" />
                <col width="160" />
                <col width="120" />
                <col />
                <col width="160" />
              </colgroup>
              <thead>
                <tr>
                  <th />
                  <th scope="col">Property Name</th>
                  <th scope="col">Type</th>
                  <th scope="col">Value / Text Expression</th>
                  <th scope="col">Evaluated Value</th>
                </tr>
              </thead>
              <tbody>
                {properties.map((p, i) => (
                  <GridRow key={p.name} $shaded={i > 0}>
                    <th scope="row">{i + 1}</th>
                    <td><CellInput aria-label="Property name" defaultValue={p.name} /></td>
                    <td>
                      <TypeCell>
                        <TypeSelect aria-label="Type" defaultValue={p.type}>
                          <option>{p.type}</option>
                        </TypeSelect>
                        <DropMark><Caret color="#000" size={8} /></DropMark>
                      </TypeCell>
                    </td>
                    <td><CellInput aria-label="Value" defaultValue={p.value} /></td>
                    <td>{p.value}</td>
                  </GridRow>
                ))}
              </tbody>
            </Grid>
          </GridFrame>
        </Panel>
        <Footer>
          <Button $width={74} $tall $primary>OK</Button>
          <Button $width={74} $tall>Cancel</Button>
          <Button $width={74} $tall>Help</Button>
          <Grip>
            <svg width="11" height="12" aria-hidden="true">
              <path d="M0 12L11 1M3 12l8-8M6 12l5-5M9 12l2-2" stroke="#8a8a8a" />
            </svg>
          </Grip>
        </Footer>
      </Client>
    </Window>
  );
};

/* ---------- app ---------- */

const quickTools: [string, boolean][] = [
  ['newDoc', false], ['open', false], ['save', false], ['print', true], ['undo', false], ['cursor', false],
];

export default function App() {
  return (
    <Page>
      <GlobalStyle />
      <TitleBar>
        <Logo>
          <Icon name="ds" size={22} />
          <span>
            <Brand $bold>SOLID</Brand>
            <Brand>WORKS</Brand>
          </span>
        </Logo>
        <Menu>
          {['File', 'Edit', 'View', 'Insert', 'Tools', 'Window', 'Help'].map((m) => (
            <MenuItem key={m}>{m}</MenuItem>
          ))}
          <Icon name="pin" />
        </Menu>
        <QuickBar>
          {quickTools.map(([name, dark]) => (
            <React.Fragment key={name}>
              <ToolButton aria-label={name}><Icon name={name} size={17} /></ToolButton>
              <ToolButton $width={16} aria-label={`${name} options`}><Caret color={dark ? '#222' : '#85878b'} /></ToolButton>
            </React.Fragment>
          ))}
          <ToolButton aria-label="Rebuild"><Icon name="traffic" /></ToolButton>
          <Highlighted>
            <ToolButton aria-label="File properties"><Icon name="props" size={17} /></ToolButton>
          </Highlighted>
          <ToolButton aria-label="Options"><Icon name="list" size={17} /></ToolButton>
          <ToolButton $width={16} aria-label="More options"><Caret color="#222" /></ToolButton>
        </QuickBar>
        <FileName>Yoke_male_&amp;.SLDPRT</FileName>
      </TitleBar>
      <Ribbon>
        <Group $width={116}>
          <Big icon="sketch" label="Sketch" width={50} />
          <Big icon="dim" label={'Smart\nDimension'} width={59} />
        </Group>
        <Group $width={135}>
          <DrawGrid>
            {drawTools.map(([name, menu]) => (
              <DrawCell key={name}>
                <ToolButton aria-label={name}><Icon name={name} size={17} /></ToolButton>
                {menu && <ToolButton $width={16} aria-label={`${name} options`}><Caret /></ToolButton>}
              </DrawCell>
            ))}
          </DrawGrid>
        </Group>
        <Group $width={317}>
          <Big icon="trim" label={'Trim\nEntities'} width={44} />
          <Big icon="convert" label={'Convert\nEntities'} width={54} />
          <Big icon="offset" label={'Offset\nEntities'} width={44} low />
          <List>
            <ListButton><Icon name="mirror" size={17} /><span>Mirror Entities</span></ListButton>
            <ListButton><Icon name="pattern" size={17} /><span>Linear Sketch Pattern</span><Caret /></ListButton>
            <ListButton><Icon name="move" size={17} /><span>Move Entities</span><Caret /></ListButton>
          </List>
        </Group>
        <Group $width={131}>
          <Big icon="relations" label={'Display/Delete\nRelations'} width={82} />
          <Big icon="repair" label={'Repair\nSketch'} width={44} low />
        </Group>
        <Group $width={44}>
          <Big icon="snaps" label={'Quick\nSnaps'} width={38} />
        </Group>
        <Group $last>
          <Big icon="rapid" label={'Rapid\nSketch'} width={43} low on />
        </Group>
      </Ribbon>
      <TabRow>
        {['Features', 'Sketch', 'Surfaces', 'Sheet Metal', 'Evaluate', 'DimXpert', 'SOLIDWORKS Add-Ins'].map((t) => (
          <CommandTab key={t} $active={t === 'Sketch'}>{t}</CommandTab>
        ))}
        <ViewBar>
          {viewTools.map(([name, menu]) => (
            <React.Fragment key={name}>
              <ToolButton $width={23} aria-label={name}><Icon name={name} /></ToolButton>
              {menu && <ToolButton $width={14} aria-label={`${name} options`}><Caret color="#8f9195" /></ToolButton>}
            </React.Fragment>
          ))}
        </ViewBar>
      </TabRow>
      <Workspace>
        <SidePanel>
          <PanelTabs>
            {['part', 'propPanel', 'config', 'target', 'ball'].map((n, i) => (
              <PanelTab key={n} $active={i === 0} aria-label={n}><Icon name={n} size={17} /></PanelTab>
            ))}
          </PanelTabs>
          <FilterBox><Icon name="funnel" size={14} /></FilterBox>
          <Tree>
            <TreeItem $root>
              <Icon name="part" />
              Yoke_male_&amp;  (Default)
            </TreeItem>
            {features.map((f, i) => (
              <TreeItem key={f.label}>
                <TreeIcons>
                  <Guide expandable={f.plus} last={i === features.length - 1} />
                  <Icon name={f.icon} />
                </TreeIcons>
                {f.label}
              </TreeItem>
            ))}
          </Tree>
        </SidePanel>
        <Viewport>
          <YokeModel />
        </Viewport>
      </Workspace>
      <SummaryDialog />
    </Page>
  );
}
